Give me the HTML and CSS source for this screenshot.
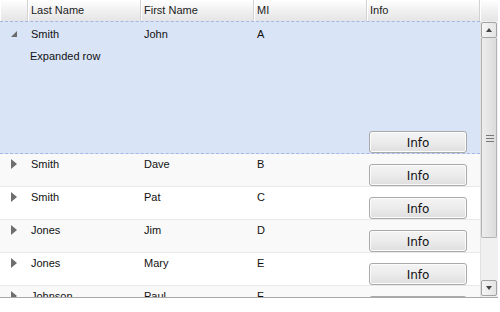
FILE: index.html
```html
<!DOCTYPE html>
<html>
<head>
<meta charset="utf-8">
<link rel="stylesheet" href="styles.css">
</head>
<body>
<div class="grid">
  <div class="header">
    <div class="hcell"></div>
    <div class="hcell">Last Name</div>
    <div class="hcell">First Name</div>
    <div class="hcell">MI</div>
    <div class="hcell">Info</div>
    <div class="hcell hlast"></div>
  </div>
  <div class="body">
    <div class="rows">
      <div class="row expanded">
        <div class="cell exp"><span class="tri-open"></span></div>
        <div class="cell">Smith</div>
        <div class="cell">John</div>
        <div class="cell">A</div>
        <div class="cell info"><button class="btn">Info</button></div>
        <div class="detail">Expanded row</div>
      </div>
      <div class="row alt">
        <div class="cell exp"><span class="tri"></span></div>
        <div class="cell">Smith</div>
        <div class="cell">Dave</div>
        <div class="cell">B</div>
        <div class="cell info"><button class="btn">Info</button></div>
      </div>
      <div class="row">
        <div class="cell exp"><span class="tri"></span></div>
        <div class="cell">Smith</div>
        <div class="cell">Pat</div>
        <div class="cell">C</div>
        <div class="cell info"><button class="btn">Info</button></div>
      </div>
      <div class="row alt">
        <div class="cell exp"><span class="tri"></span></div>
        <div class="cell">Jones</div>
        <div class="cell">Jim</div>
        <div class="cell">D</div>
        <div class="cell info"><button class="btn">Info</button></div>
      </div>
      <div class="row">
        <div class="cell exp"><span class="tri"></span></div>
        <div class="cell">Jones</div>
        <div class="cell">Mary</div>
        <div class="cell">E</div>
        <div class="cell info"><button class="btn">Info</button></div>
      </div>
      <div class="row alt">
        <div class="cell exp"><span class="tri"></span></div>
        <div class="cell">Johnson</div>
        <div class="cell">Paul</div>
        <div class="cell">F</div>
        <div class="cell info"><button class="btn">Info</button></div>
      </div>
    </div>
    <div class="scrollbar">
      <div class="sb-btn"><span class="arr-up"></span></div>
      <div class="sb-track">
        <div class="sb-thumb"><span class="grip"></span></div>
      </div>
      <div class="sb-btn"><span class="arr-down"></span></div>
    </div>
  </div>
</div>
</body>
</html>
```
FILE: styles.css
```css
html, body {
  margin: 0;
  padding: 0;
  background: #fff;
}
body {
  font-family: "Liberation Sans", Arial, sans-serif;
  font-size: 11px;
  color: #111;
}
.grid {
  width: 498px;
  height: 297px;
  border-bottom: 1px solid #a8a8a8;
  display: flex;
  flex-direction: column;
  overflow: hidden;
}
.header {
  display: grid;
  grid-template-columns: 28px 113px 113px 113px 113px 18px;
  height: 21px;
  flex: none;
  background: linear-gradient(#ffffff, #f1f1f1 50%, #e5e5e5);
}
.hcell {
  border-right: 1px solid #d2d2d2;
  box-shadow: inset 1px 0 0 #ffffff;
  padding: 4px 3px 0 3px;
  color: #222;
  white-space: nowrap;
  overflow: hidden;
}
.hlast {
  border-right: none;
}
.body {
  flex: 1;
  display: flex;
  min-height: 0;
}
.rows {
  width: 480px;
  overflow: hidden;
}
.row {
  display: grid;
  grid-template-columns: 28px 113px 113px 113px 113px;
  grid-template-rows: 32px;
  border-bottom: 1px solid #e8e8e8;
  background: #fff;
}
.row.alt {
  background: #f9f9f9;
}
.row.expanded {
  background: #d9e4f6;
  border-top: 1px dashed #a4b8e2;
  border-bottom: 1px dashed #a4b8e2;
  grid-template-rows: 22px 22px 1fr;
  height: 131px;
}
.cell {
  padding: 4px 3px 0 3px;
  white-space: nowrap;
}
.row.expanded .cell {
  padding-top: 6px;
}
.exp {
  position: relative;
  padding: 0;
}
.tri {
  position: absolute;
  left: 11px;
  top: 5px;
  width: 0;
  height: 0;
  border-top: 5px solid transparent;
  border-bottom: 5px solid transparent;
  border-left: 6px solid #6e6e6e;
}
.tri-open {
  position: absolute;
  left: 11px;
  top: 9px;
  width: 0;
  height: 0;
  border-left: 6px solid transparent;
  border-bottom: 6px solid #6a6a6a;
}
.info {
  padding: 0 0 0 2px;
  display: flex;
  align-items: flex-end;
}
.row.expanded .info {
  grid-row: 1 / 4;
  grid-column: 5;
  padding: 0 0 0 2px;
}
.detail {
  grid-row: 2;
  grid-column: 2 / 5;
  padding: 6px 2px 0 2px;
}
.btn {
  width: 98px;
  height: 22px;
  margin: 0;
  padding: 2px 0 0 0;
  border: 1px solid #a9a9a9;
  border-radius: 3px;
  background: linear-gradient(#f4f4f4, #ececec 50%, #dedede);
  box-shadow: inset 0 0 0 1px #fcfcfc;
  font-family: "DejaVu Sans", "Liberation Sans", sans-serif;
  font-size: 12px;
  color: #111;
}
.scrollbar {
  width: 18px;
  display: flex;
  flex-direction: column;
  background: #f0f0f0;
  border-left: 1px solid #e2e2e2;
  box-sizing: border-box;
  padding: 1px 1px 1px 0;
}
.sb-btn {
  height: 16px;
  flex: none;
  border: 1px solid #a3a3a3;
  border-radius: 2px;
  background: linear-gradient(90deg, #f6f6f6, #e4e4e4);
  box-sizing: border-box;
  position: relative;
}
.arr-up, .arr-down {
  position: absolute;
  left: 4px;
  width: 0;
  height: 0;
  border-left: 3.5px solid transparent;
  border-right: 3.5px solid transparent;
}
.arr-up {
  top: 5px;
  border-bottom: 4px solid #444;
}
.arr-down {
  top: 5px;
  border-top: 4px solid #444;
}
.sb-track {
  flex: 1;
  position: relative;
}
.sb-thumb {
  height: 200px;
  border: 1px solid #b4b4b4;
  border-top: none;
  border-radius: 0 0 2px 2px;
  background: linear-gradient(90deg, #ededed, #dcdcdc);
  box-sizing: border-box;
  position: relative;
}
.grip {
  position: absolute;
  left: 4px;
  top: 97px;
  width: 8px;
  height: 7px;
  background: linear-gradient(#777 0 1px, transparent 1px 3px, #777 3px 4px, transparent 4px 6px, #777 6px 7px);
}
```
